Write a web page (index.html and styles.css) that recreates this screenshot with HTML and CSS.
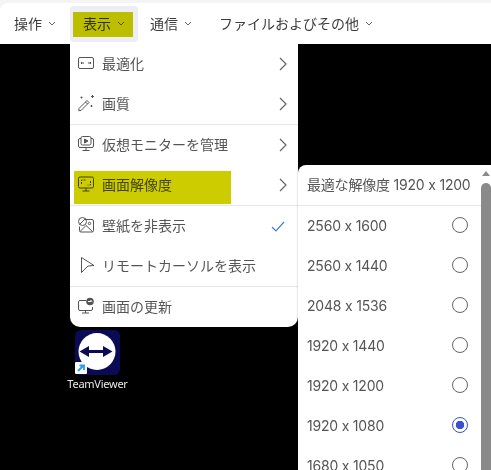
FILE: index.html
```html
<!DOCTYPE html>
<html lang="ja">
<head>
  <meta charset="UTF-8">
  <title>リモート表示メニュー</title>
  <link rel="stylesheet" href="styles.css">
</head>
<body>
  <div id="toolbar">
    <div class="tool"><span>操作</span><svg class="caret" viewBox="0 0 8 5"><path d="M1 1l3 3 3-3"/></svg></div>
    <div class="tool active"><span>表示</span><svg class="caret" viewBox="0 0 8 5"><path d="M1 1l3 3 3-3"/></svg><span class="mark mark-tool"></span></div>
    <div class="tool"><span>通信</span><svg class="caret" viewBox="0 0 8 5"><path d="M1 1l3 3 3-3"/></svg></div>
    <div class="tool"><span>ファイルおよびその他</span><svg class="caret" viewBox="0 0 8 5"><path d="M1 1l3 3 3-3"/></svg></div>
  </div>

  <div id="desktop">
    <div id="shortcut">
      <svg class="tv-icon" viewBox="0 0 45 45">
        <rect width="45" height="45" rx="6" fill="#0a0a55"/>
        <circle cx="22" cy="21.500" r="18.500" fill="#fff"/>
        <path d="M4.500 21.500l9.500-5.500v4h14v-4l9.500 5.500-9.500 5.500v-4h-14v4z" fill="#0a0a55"/>
        <rect y="32" width="12" height="12" rx="1" fill="#fff"/>
        <path d="M3 41l5-5M4.500 35.500h4.500v4.500" fill="none" stroke="#2a9bea" stroke-width="1.800"/>
      </svg>
      <span>TeamViewer</span>
    </div>

    <div id="menu">
      <div class="row">
        <svg class="ico" viewBox="0 0 18 18"><rect x="1.500" y="3.500" width="15" height="11" rx="1.500"/><path d="M4 9h3M11 9h3M5 8l-1 1 1 1M13 8l1 1-1 1"/></svg>
        <span class="label">最適化</span>
        <svg class="chev" viewBox="0 0 8 14"><path d="M1 1l6 6-6 6"/></svg>
      </div>
      <div class="row sep">
        <svg class="ico" viewBox="0 0 18 18"><path d="M2 14.500l8-8 2 2-8 8-2.200 .2z"/><path d="M8.500 8l2 2M15.500 1v3M14 2.500h3M4.500 2.500v2M3.500 3.500h2M14.500 11v2M13.500 12h2"/></svg>
        <span class="label">画質</span>
        <svg class="chev" viewBox="0 0 8 14"><path d="M1 1l6 6-6 6"/></svg>
      </div>
      <div class="row">
        <svg class="ico" viewBox="0 0 18 18"><path d="M4 3.500h-1a1.500 1.500 0 0 0-1.500 1.500v6a1.500 1.500 0 0 0 1.500 1.500h12a1.500 1.500 0 0 0 1.500-1.500v-6a1.500 1.500 0 0 0-1.500-1.500h-1M9 12.500v3M5.500 15.500h7"/><rect x="4" y="1.500" width="10" height="8.500" rx="1.500"/><path d="M7.500 4l3.500 2-3.500 2z" fill="#555"/></svg>
        <span class="label">仮想モニターを管理</span>
        <svg class="chev" viewBox="0 0 8 14"><path d="M1 1l6 6-6 6"/></svg>
      </div>
      <div class="row sep">
        <svg class="ico" viewBox="0 0 18 18"><rect x="1.500" y="2" width="15" height="11" rx="1.500"/><path d="M9 13v3M5.500 16h7"/><path d="M4.500 9v-4h4M13.500 6v4h-3" stroke-dasharray="2 1"/></svg>
        <span class="label">画面解像度</span>
        <svg class="chev" viewBox="0 0 8 14"><path d="M1 1l6 6-6 6"/></svg>
        <span class="mark mark-row"></span>
      </div>
      <div class="row">
        <svg class="ico" viewBox="0 0 18 18"><path d="M8 3.500h7a1.500 1.500 0 0 1 1.500 1.500v9.500a1.500 1.500 0 0 1-1.500 1.500h-11a1.500 1.500 0 0 1-1.500-1.500v-4"/><circle cx="5.500" cy="5.500" r="4"/><path d="M2.700 8.300l5.600-5.600M3 15.500l6-6 6.500 6"/><circle cx="12.500" cy="7.500" r="1.200"/></svg>
        <span class="label">壁紙を非表示</span>
        <svg class="check" viewBox="0 0 14 11"><path d="M1 6l4 4 8-9"/></svg>
      </div>
      <div class="row sep">
        <svg class="ico" viewBox="0 0 18 18"><path d="M4.500 1.500l12.500 8-6 .5-6.500 6.500z"/></svg>
        <span class="label">リモートカーソルを表示</span>
      </div>
      <div class="row">
        <svg class="ico" viewBox="0 0 18 18"><path d="M9 3.500h-6a1.500 1.500 0 0 0-1.500 1.500v7a1.500 1.500 0 0 0 1.500 1.500h11a1.500 1.500 0 0 0 1.500-1.500v-2M8.500 13.500v2.500M5 16h7"/><circle cx="13" cy="4.500" r="3.800" fill="#555" stroke="none"/><path d="M11 4.500h3.500M13.500 3l1.500 1.500" stroke="#fff"/></svg>
        <span class="label">画面の更新</span>
      </div>
    </div>

    <div id="submenu">
      <div id="reslist">
        <div class="res sep"><span>最適な解像度 1920 x 1200</span></div>
        <div class="res"><span>2560 x 1600</span><i class="radio"></i></div>
        <div class="res"><span>2560 x 1440</span><i class="radio"></i></div>
        <div class="res"><span>2048 x 1536</span><i class="radio"></i></div>
        <div class="res"><span>1920 x 1440</span><i class="radio"></i></div>
        <div class="res"><span>1920 x 1200</span><i class="radio"></i></div>
        <div class="res"><span>1920 x 1080</span><i class="radio on"></i></div>
        <div class="res"><span>1680 x 1050</span><i class="radio"></i></div>
      </div>
      <div id="scrollbar">
        <svg class="arrow" viewBox="0 0 8 5"><path d="M4 0l4 5h-8z"/></svg>
        <div class="thumb"></div>
      </div>
    </div>
  </div>
</body>
</html>
```

FILE: styles.css
```css
html, body { margin: 0; height: 470px; overflow: hidden; }
body { font-family: "Inter", "Noto Sans CJK JP", sans-serif; font-size: 14px; color: #555; background: #f4f4f4; display: flex; flex-direction: column; font-feature-settings: "calt" 0; }

#toolbar { margin-top: 3px; height: 41px; background: #fff; border-radius: 8px 0 0 0; display: flex; align-items: center; padding-left: 1px; color: #3c3c3c; flex-shrink: 0; }
.tool { position: relative; display: flex; align-items: center; gap: 6px; height: 36px; padding: 0 13px; margin-right: 1px; border-radius: 4px; white-space: nowrap; }
.tool span:first-child { margin-bottom: 2px; }
.tool.active { background: #eceef3; width: 68px; box-sizing: border-box; margin-right: -1px; }
.caret { width: 8px; height: 5px; fill: none; stroke: #666; stroke-width: 1; }

.mark { position: absolute; background: #cccc00; mix-blend-mode: multiply; }
.mark-tool { left: 3px; top: 6px; width: 60px; height: 25px; }
.mark-row { left: 4px; top: 6px; width: 157px; height: 33px; }

#desktop { position: relative; flex: 1; background: #000; }

#shortcut { position: absolute; left: 60px; top: 286px; width: 75px; display: flex; flex-direction: column; align-items: center; gap: 1px; color: #e8e8e8; font-family: "Noto Sans", sans-serif; font-size: 11px; letter-spacing: -.25px; }
.tv-icon { width: 45px; height: 45px; }

#menu { position: absolute; left: 70px; top: 0; width: 228px; background: #fff; border-radius: 0 0 10px 10px; }
.row { position: relative; display: flex; align-items: center; height: 40px; padding: 0 8px 0 7px; }
.row.sep { height: 41px; box-sizing: border-box; border-bottom: 1px solid #e6e7ea; }
.ico { width: 18px; height: 18px; margin: 0 7px 2px 0; fill: none; stroke: #555; stroke-width: 1; flex-shrink: 0; }
.label { flex: 1; white-space: nowrap; margin-bottom: 2px; }
.chev { width: 8px; height: 14px; margin-right: 3px; fill: none; stroke: #666; stroke-width: 1.200; }
.check { width: 14px; height: 11px; margin-right: 5px; fill: none; stroke: #3f7fd8; stroke-width: 1.200; }

#submenu { position: absolute; left: 298px; top: 121px; width: 193px; height: 330px; background: #fff; border-radius: 8px 0 0 0; display: flex; overflow: hidden; box-shadow: -1px 0 2px rgba(0,0,0,.1); }
#reslist { flex: 1; }
.res { display: flex; align-items: center; justify-content: space-between; height: 40px; padding: 0 13px 0 9px; white-space: nowrap; letter-spacing: -.2px; }
.res span { margin-bottom: 2px; }
.res.sep { height: 41px; box-sizing: border-box; border-bottom: 1px solid #e6e7ea; padding-right: 0; }
.radio { width: 16px; height: 16px; box-sizing: border-box; border: 1px solid #666; border-radius: 50%; margin-bottom: 2px; }
.radio.on { border-color: #3a50d0; background: radial-gradient(circle, #3a50d0 0 4px, #fff 4.500px); }

#scrollbar { width: 10px; flex-shrink: 0; display: flex; flex-direction: column; align-items: center; background: #fff; }
.arrow { width: 8px; height: 5px; margin-top: 6px; fill: #8a8a8a; }
.thumb { flex: 1; width: 10px; margin-top: 7px; background: #8a8a8a; border-radius: 5px 5px 0 0; }
```
